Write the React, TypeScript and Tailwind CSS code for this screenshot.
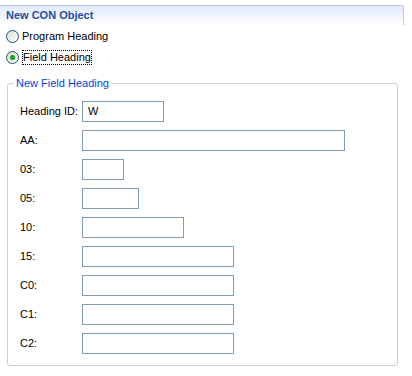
import React from 'react';

const fields: { label: string; width: string; value?: string }[] = [
  { label: 'Heading ID:', width: 'w-[82px]', value: 'W' },
  { label: 'AA:', width: 'w-[263px]' },
  { label: '03:', width: 'w-[42px]' },
  { label: '05:', width: 'w-[57px]' },
  { label: '10:', width: 'w-[102px]' },
  { label: '15:', width: 'w-[152px]' },
  { label: 'C0:', width: 'w-[152px]' },
  { label: 'C1:', width: 'w-[152px]' },
  { label: 'C2:', width: 'w-[152px]' },
];

const Radio = ({ checked }: { checked?: boolean }) => (
  <span className="flex h-[13px] w-[13px] shrink-0 items-center justify-center rounded-full border border-[#1c5180] bg-gradient-to-br from-[#dcdcd4] to-white">
    {checked && <span className="h-[5px] w-[5px] rounded-full bg-[#21a121] shadow-[0_0_1px_#6fd36f]" />}
  </span>
);

export default function App() {
  return (
    <div className="h-[376px] w-[412px] bg-white pt-[5px] font-['Liberation_Sans',Arial,sans-serif] text-[11px] text-black">
      {/* Section header */}
      <div className="mr-[8px] h-[20px] rounded-tr-[2px] border-t border-r border-[#b7cbef] bg-gradient-to-b from-[#e2eafb] to-white pl-[6px] text-[11px] font-bold leading-[19px] text-[#1f4e9d]">
        New CON Object
      </div>

      {/* Radios */}
      <div className="flex flex-col pt-[1px] pl-[6px]">
        <label className="flex h-[21px] items-center gap-[3px]">
          <Radio />
          <span>Program Heading</span>
        </label>
        <label className="flex h-[21px] items-center gap-[3px]">
          <Radio checked />
          <span className="border border-dotted border-black leading-[13px]">Field Heading</span>
        </label>
      </div>

      {/* Group box */}
      <fieldset className="mt-[9px] ml-[7px] w-[391px] rounded-[3px] border border-[#d0d0bf] px-[12px] pt-[11px] pb-[11px]">
        <legend className="-ml-[6px] px-[2px] leading-[13px] text-[#0046d5]">New Field Heading</legend>
        <div className="flex flex-col gap-[8px]">
          {fields.map((f) => (
            <div key={f.label} className="flex h-[21px] items-center">
              <span className="w-[62px] shrink-0">{f.label}</span>
              <div className={`${f.width} h-[21px] border border-[#7f9db9] bg-white pl-[5px] leading-[19px]`}>
                {f.value}
              </div>
            </div>
          ))}
        </div>
      </fieldset>
    </div>
  );
}
